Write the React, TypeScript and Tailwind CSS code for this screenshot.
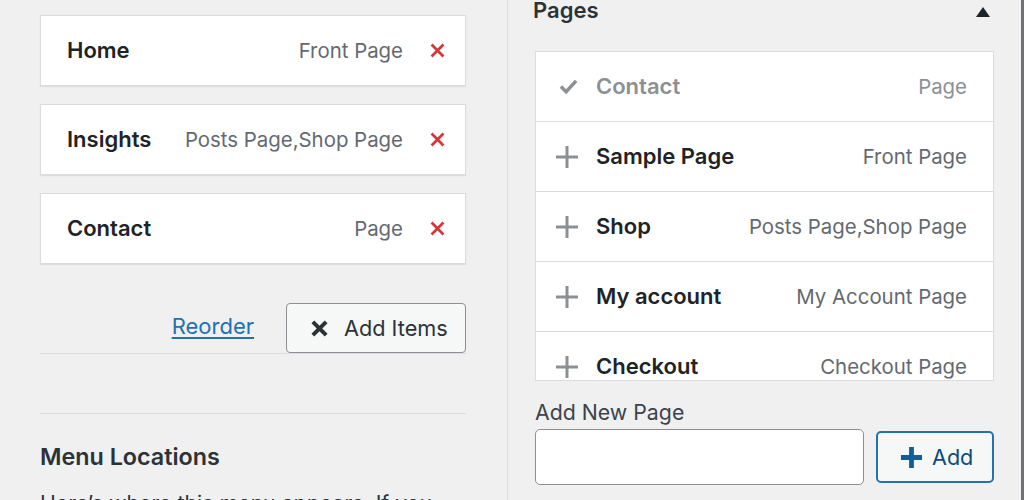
import { type ReactNode } from 'react';

const MENU_ITEMS = [
  { title: 'Home', type: 'Front Page' },
  { title: 'Insights', type: 'Posts Page,Shop Page' },
  { title: 'Contact', type: 'Page' },
];

const PAGES = [
  { title: 'Contact', type: 'Page', added: true },
  { title: 'Sample Page', type: 'Front Page', added: false },
  { title: 'Shop', type: 'Posts Page,Shop Page', added: false },
  { title: 'My account', type: 'My Account Page', added: false },
  { title: 'Checkout', type: 'Checkout Page', added: false },
];

function CrossIcon({ className, width = 3.2 }: { className?: string; width?: number }) {
  return (
    <svg viewBox="0 0 20 20" className={className} fill="none" stroke="currentColor" strokeWidth={width}>
      <path d="M3 3 L17 17 M17 3 L3 17" />
    </svg>
  );
}

function PlusIcon({ className, width = 3 }: { className?: string; width?: number }) {
  return (
    <svg viewBox="0 0 24 24" className={className} fill="none" stroke="currentColor" strokeWidth={width}>
      <path d="M12 1 V23 M1 12 H23" />
    </svg>
  );
}

function CheckIcon({ className }: { className?: string }) {
  return (
    <svg viewBox="0 0 20 20" className={className} fill="none" stroke="currentColor" strokeWidth={3.6}>
      <path d="M2 10 L7.5 15.5 L18 4" />
    </svg>
  );
}

function MenuItemCard({ title, type }: { title: string; type: string }) {
  return (
    <div className="flex h-[71px] items-center border border-[#dcdcde] bg-white pl-[26px] pr-[19px] shadow-[0_1px_1px_rgba(0,0,0,0.08)]">
      <div className="flex flex-1 items-baseline">
        <span className="text-[22px] font-semibold text-[#1d2327]">{title}</span>
        <span className="ml-auto text-[20.4px] text-[#646970]">{type}</span>
      </div>
      <CrossIcon className="ml-[26px] h-[17px] w-[17px] text-[#d63638]" />
    </div>
  );
}

function PageRow({ title, type, added }: { title: string; type: string; added: boolean }): ReactNode {
  return (
    <div className="flex h-[70px] shrink-0 items-center border-b border-[#dcdcde] pl-[18px] pr-[26px]">
      <span className="flex w-[25px] justify-center">
        {added ? (
          <CheckIcon className="ml-[4px] h-[19px] w-[19px] text-[#8c8f94]" />
        ) : (
          <PlusIcon className="h-[24px] w-[24px] text-[#8c8f94]" />
        )}
      </span>
      <div className="ml-[17px] flex flex-1 items-baseline">
        <span className={`text-[22px] font-semibold ${added ? 'text-[#8c8f94]' : 'text-[#1d2327]'}`}>{title}</span>
        <span className={`ml-auto text-[20.4px] ${added ? 'text-[#8c8f94]' : 'text-[#646970]'}`}>{type}</span>
      </div>
    </div>
  );
}

export default function App() {
  return (
    <div className="flex h-[500px] w-[1024px] overflow-hidden bg-[#f0f0f1] font-['Inter',sans-serif]">
      <section className="w-[508px] shrink-0 border-r border-[#dcdcde] pl-[40px] pr-[41px] pt-[15px]">
        <div className="flex flex-col gap-[18px]">
          {MENU_ITEMS.map((item) => (
            <MenuItemCard key={item.title} {...item} />
          ))}
        </div>

        <div className="mt-[39px] flex items-center justify-end gap-[32px] border-b border-[#dcdcde]">
          <a href="#" className="-mt-[4px] text-[22px] text-[#2271b1] underline underline-offset-[3px]">
            Reorder
          </a>
          <button className="flex h-[50px] w-[180px] items-center rounded-[4px] border-[1.5px] border-[#8c8f94] bg-[#f6f7f7] pl-[23px] text-[21.7px] text-[#2c3338]">
            <CrossIcon className="h-[19px] w-[19px]" width={4.2} />
            <span className="ml-[15px]">Add Items</span>
          </button>
        </div>

        <div className="mt-[59px] border-t border-[#dcdcde] pt-[28px]">
          <h3 className="text-[23.3px] font-semibold leading-[30px] text-[#2c3338]">Menu Locations</h3>
          <p className="mt-[16px] text-[21.3px] leading-[30px] text-[#2c3338]">
            Here’s where this menu appears. If you would like to change that, pick another location.
          </p>
        </div>
      </section>

      <section className="flex-1 border-r-[4px] border-[#6e7175] px-[27px]">
        <div className="-mt-[3px] flex h-[26px] items-center justify-between pr-[4px]">
          <h3 className="-ml-[2px] text-[22px] font-semibold leading-[26px] text-[#2c3338]">Pages</h3>
          <svg viewBox="0 0 14 10" className="mt-[3px] h-[10px] w-[14px] text-[#1d2327]" fill="currentColor">
            <path d="M7 0 L14 10 L0 10 Z" />
          </svg>
        </div>

        <div className="mt-[28px] flex h-[330px] flex-col overflow-hidden border border-[#dcdcde] bg-white">
          {PAGES.map((page) => (
            <PageRow key={page.title} {...page} />
          ))}
        </div>

        <label className="mt-[19px] block text-[21.3px] leading-[25px] text-[#3c434a]">Add New Page</label>
        <div className="mt-[4px] flex items-center gap-[12px]">
          <input
            type="text"
            className="h-[56px] w-[329px] rounded-[5px] border border-[#8c8f94] bg-white px-[12px] text-[20px] outline-none"
          />
          <button className="flex h-[52px] w-[118px] items-center rounded-[5px] border-[2px] border-[#2271b1] bg-[#f6f7f7] pl-[22px] text-[21.6px] text-[#0a4b78]">
            <PlusIcon className="h-[23px] w-[23px] text-[#135e96]" width={5} />
            <span className="ml-[9px]">Add</span>
          </button>
        </div>
      </section>
    </div>
  );
}
